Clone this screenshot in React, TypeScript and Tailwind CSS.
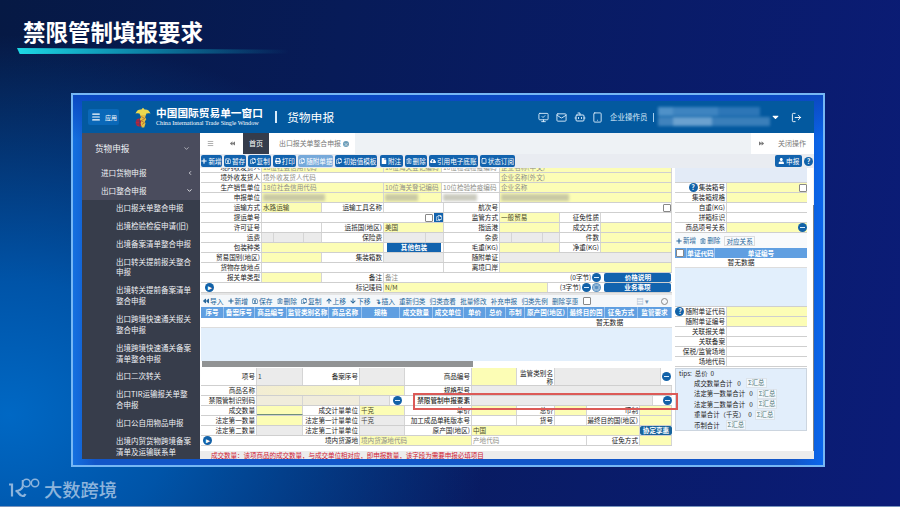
import type { ReactNode } from "react";
import {
  FaArrowDown,
  FaArrowUp,
  FaBackward,
  FaCaretDown,
  FaCloudUploadAlt,
  FaFile,
  FaForward,
  FaPlus,
  FaPrint,
  FaRegCopy,
  FaRegSave,
  FaRegTrashAlt,
  FaUser,
} from "react-icons/fa";
import { ChevronDown, ChevronLeft, LogOut, Mail, Menu, MonitorCheck, Bot, Tablet } from "lucide-react";

type CellProps = {
  w: string;
  tone?: "label" | "white" | "yellow" | "gray" | "beige";
  hint?: boolean;
  className?: string;
  children?: ReactNode;
};

const tones = {
  label: "bg-white justify-end pr-[1px] text-[#222]",
  white: "bg-white pl-[1px] text-[#444]",
  yellow: "bg-[#fcfdb5] pl-[1px] text-[#4b4b2c]",
  gray: "bg-[#ebebeb] pl-[1px] text-[#444]",
  beige: "bg-[#f0ecdc] pl-[1px] text-[#444]",
};

function Cell({ w, tone = "label", hint, className = "", children }: CellProps) {
  return (
    <div
      className={`flex shrink-0 items-center overflow-hidden border-r border-[#d5d5d5] whitespace-nowrap ${w} ${tones[tone]} ${className}`}
    >
      {hint ? <span className="text-[#8f8f88]">{children}</span> : children}
    </div>
  );
}

function Row({ h = "h-[10px]", children }: { h?: string; children: ReactNode }) {
  return <div className={`flex shrink-0 border-b border-[#cfcfcf] bg-white ${h}`}>{children}</div>;
}

function Box() {
  return <span className="inline-block h-[8px] w-[8px] shrink-0 rounded-[1px] border border-[#888] bg-white" />;
}

function Dot({ children }: { children?: ReactNode }) {
  return (
    <span className="flex h-[9px] w-[9px] shrink-0 items-center justify-center rounded-full bg-[#1262a8] text-[7px] leading-none font-bold text-white">
      {children ?? <span className="h-[1.5px] w-[5px] bg-[#d8ecff]" />}
    </span>
  );
}

function Mosaic({ w }: { w: string }) {
  return <span className={`h-[7px] bg-[#aeae9c] opacity-65 blur-[1.5px] ${w}`} />;
}

const menu = [
  ["出口报关单整合申报"],
  ["出境检验检疫申请(旧)"],
  ["出境备案清单整合申报"],
  ["出口转关提前报关整合", "申报"],
  ["出境转关提前备案清单", "整合申报"],
  ["出口跨境快速通关报关", "整合申报"],
  ["出境跨境快速通关备案", "清单整合申报"],
  ["出口二次转关"],
  ["出口TIR运输报关单整", "合申报"],
  ["出口公自用物品申报"],
  ["出境内贸货物跨境备案", "清单及运输联系单"],
];

const actions = [
  { text: "新增", icon: <FaPlus />, w: "w-[21px]" },
  { text: "暂存", icon: <FaRegSave />, w: "w-[22px]" },
  { text: "复制", icon: <FaRegCopy />, w: "w-[23px]" },
  { text: "打印", icon: <FaPrint />, w: "w-[23px]" },
  { text: "随附单据", icon: <FaRegCopy />, w: "w-[35px]", dim: true },
  { text: "初始值模板", icon: <FaRegCopy />, w: "w-[42px]" },
  { text: "附注", icon: <FaFile />, w: "w-[23px]" },
  { text: "删除", icon: <FaRegTrashAlt />, w: "w-[22px]" },
  { text: "引用电子底账", icon: <FaCloudUploadAlt />, w: "w-[49px]" },
  { text: "状态订阅", icon: <Tablet strokeWidth={3} />, w: "w-[35px]" },
];

const tools = [
  { text: "导入", icon: <FaBackward /> },
  { text: "新增", icon: <FaPlus /> },
  { text: "保存", icon: <FaRegSave /> },
  { text: "删除", icon: <FaRegTrashAlt /> },
  { text: "复制", icon: <FaRegCopy /> },
  { text: "上移", icon: <FaArrowUp /> },
  { text: "下移", icon: <FaArrowDown /> },
  { text: "插入", icon: <span className="font-bold">↴</span> },
];

const moreTools = ["重新归类", "归类查看", "批量修改", "补充申报", "归类先例", "删除享惠"];

const columns = [
  { text: "序号", w: "w-[23px]" },
  { text: "备案序号", w: "w-[31px]" },
  { text: "商品编号", w: "w-[32px]" },
  { text: "监管类别名称", w: "w-[42px]" },
  { text: "商品名称", w: "w-[33px]" },
  { text: "规格", w: "w-[38px]" },
  { text: "成交数量", w: "w-[33px]" },
  { text: "成交单位", w: "w-[31px]" },
  { text: "单价", w: "w-[22px]" },
  { text: "总价", w: "w-[20px]" },
  { text: "币制", w: "w-[19px]" },
  { text: "原产国(地区)", w: "w-[43px]" },
  { text: "最终目的国", w: "w-[37px]" },
  { text: "征免方式", w: "w-[33px]" },
  { text: "监管要求", w: "w-[34px]" },
];

const totals = [
  { text: "成交数量合计", value: "0", gap: "gap-[5px]" },
  { text: "法定第一数量合计", value: "0", gap: "gap-[4px]" },
  { text: "法定第二数量合计", value: "0", gap: "gap-[4px]" },
  { text: "重量合计（千克）", value: "0", gap: "gap-[3px]" },
  { text: "币制合计", value: "", gap: "gap-[3px]" },
];

function Header() {
  return (
    <header className="flex h-[32px] shrink-0 items-center bg-[#03599f] text-white">
      <div className="ml-[6px] flex h-[16px] w-[31px] items-center gap-[4px] rounded-[2px] bg-[#0a68b8] pl-[3px] text-[6px]">
        <Menu size={10} strokeWidth={2.8} />
        应用
      </div>
      <svg className="ml-[16px] h-[21px] w-[16px]" viewBox="0 0 16 21">
        <circle cx="4.6" cy="15.5" r="3.9" fill="#b7263a" />
        <path d="M1 14h7M1 17h7M4.5 11.5v8" stroke="#54366d" strokeWidth=".7" />
        <path d="M8 .8l1.600 1.800c3-.3 5 1.400 5.900 4-2-.7-3.600-.4-4.700.3l.6 1.200H4.600l.6-1.200C4.100 6.200 2.500 5.900.5 6.600c.9-2.600 2.900-4.300 5.900-4z" fill="#ecd94f" />
        <path d="M5 8h6l-.9 2.200 1.200 2.100-1.500 2.300.7 2-1.300 4H6.800l-1.200-4 .7-2-1.500-2.300 1.200-2.100z" fill="#e2bf42" />
        <path d="M6.200 9.500l3.600 2-3.600 2.200 3.300 2-2.500 1.800" fill="none" stroke="#b36b2e" strokeWidth=".8" />
      </svg>
      <div className="ml-[5px] w-[110px] whitespace-nowrap">
        <div className="text-[10.700px] leading-[12px] font-bold">中国国际贸易单一窗口</div>
        <div className="font-['Liberation_Serif','Noto_Sans_CJK_SC',serif] text-[6.150px] leading-[8px]">
          China International Trade Single Window
        </div>
      </div>
      <span className="ml-[9px] h-[12px] w-[2px] bg-[#d9ebfa]" />
      <span className="ml-[10px] text-[11.800px] leading-[14px]">货物申报</span>
      <div className="ml-auto flex items-center text-[#d9ebfa]">
        <MonitorCheck size={11} className="mr-[7px]" />
        <Mail size={11} className="mr-[7px]" />
        <Bot size={12} className="mr-[6px]" />
        <Tablet size={11} className="mr-[7px]" />
        <span className="w-[43px] text-[7.500px] whitespace-nowrap">企业操作员</span>
        <span className="mr-[4px] h-[9px] w-px bg-[#a5cdec]" />
        <span className="flex h-[20px] w-[112px] flex-col gap-[1px] blur-[1.5px]">
          <span className="flex h-[9px] w-[102px]">
            <span className="w-[15px] bg-[#4f91c8]" />
            <span className="w-[45px] bg-[#3e84c0]" />
            <span className="w-[42px] bg-[#2d76b7]" />
          </span>
          <span className="flex h-[9px]">
            <span className="w-[15px] bg-[#4083bd]" />
            <span className="w-[39px] bg-[#6ba1cf]" />
            <span className="w-[58px] bg-[#3a7fba]" />
          </span>
        </span>
        <FaCaretDown className="ml-[2px] h-[10px] w-[7px] text-white" />
        <LogOut size={11} className="mr-[12px] ml-[12px] text-white" />
      </div>
    </header>
  );
}

function Sidebar() {
  return (
    <aside className="flex w-[118px] shrink-0 flex-col overflow-hidden bg-[#373d4b] text-[#f1f2f5]">
      <div className="h-[67px] shrink-0 bg-[#4a4c5d]">
        <div className="flex h-[30px] items-center justify-between pr-[10px] pl-[13px] text-[8.600px]">
          货物申报 <ChevronDown size={7} />
        </div>
        <div className="flex h-[19px] items-center justify-between pr-[7px] pl-[19px] text-[7.600px]">
          进口货物申报 <ChevronLeft size={6} strokeWidth={3} />
        </div>
        <div className="flex h-[17px] items-center justify-between pr-[7px] pl-[19px] text-[7.600px]">
          出口整合申报 <ChevronDown size={7} strokeWidth={3} />
        </div>
      </div>
      <ul className="flex flex-col gap-[7.100px] pt-[3px] pl-[34px] text-[7.500px] leading-[10.800px] whitespace-nowrap">
        {menu.map((lines) => (
          <li key={lines[0]}>
            {lines.map((line) => (
              <div key={line}>{line}</div>
            ))}
          </li>
        ))}
      </ul>
    </aside>
  );
}

function Tabs() {
  return (
    <nav className="flex h-[21px] shrink-0 bg-[#eef2f5] text-[7px] text-[#777]">
      <div className="flex w-[43px] items-center justify-between bg-white pr-[7px] pl-[7px]">
        <Menu size={7} />
        <FaBackward className="h-[5px]" />
      </div>
      <div className="flex w-[26px] items-center justify-center bg-[#353c4b] text-white">首页</div>
      <div className="flex w-[86px] items-center gap-[2px] bg-white pl-[10px] text-[6.900px] whitespace-nowrap">
        出口报关单整合申报
        <span className="flex h-[6px] w-[6px] items-center justify-center rounded-full bg-[#6c9db8] text-[5px] leading-none text-white">×</span>
      </div>
      <div className="ml-auto flex w-[63px] items-center justify-between bg-white pr-[8px] pl-[7px]">
        <FaForward className="h-[5px]" />
        关闭操作
      </div>
    </nav>
  );
}

function ActionBar() {
  return (
    <div className="flex h-[14px] shrink-0 items-center gap-[2.100px] bg-[#e9ecf1] pl-[1px] text-[6.600px] leading-[10px] text-white">
      {actions.map((a) => (
        <span
          key={a.text}
          className={`flex h-[12px] shrink-0 items-center justify-center gap-[1px] rounded-[2px] whitespace-nowrap ${a.w} ${a.dim ? "bg-[#76a9da]" : "bg-[#1263ae]"} [&>svg]:h-[6px] [&>svg]:w-[6px]`}
        >
          {a.icon}
          {a.text}
        </span>
      ))}
      <span className="ml-auto flex h-[12px] w-[27px] items-center justify-center gap-[2px] rounded-[2px] bg-[#1263ae]">
        <FaUser className="h-[6px]" />
        申报
      </span>
      <span className="mr-[1px]">
        <Dot>?</Dot>
      </span>
    </div>
  );
}

function MainForm() {
  return (
    <section className="flex flex-col">
      <div className="flex h-[5px] items-end overflow-hidden border-b border-[#cfcfcf] *:h-[10px]">
        <Cell w="w-[61px]">境内收发货人</Cell>
        <Cell w="w-[122px]" tone="yellow" hint>18位社会信用代码</Cell>
        <Cell w="w-[58px]" tone="yellow" hint>10位海关登记编码</Cell>
        <Cell w="w-[58px]" tone="white" hint>10位检验检疫编码</Cell>
        <Cell w="w-[172px]" tone="yellow" hint>企业名称(中文)</Cell>
      </div>
      <Row>
        <Cell w="w-[61px]">境外收发货人</Cell>
        <Cell w="w-[238px]" tone="white" hint>境外收发货人代码</Cell>
        <Cell w="w-[172px]" tone="yellow" hint>企业名称(外文)</Cell>
      </Row>
      <Row>
        <Cell w="w-[61px]">生产销售单位</Cell>
        <Cell w="w-[122px]" tone="yellow" hint>18位社会信用代码</Cell>
        <Cell w="w-[58px]" tone="yellow" hint>10位海关登记编码</Cell>
        <Cell w="w-[58px]" tone="white" hint>10位检验检疫编码</Cell>
        <Cell w="w-[172px]" tone="yellow" hint>企业名称</Cell>
      </Row>
      <Row>
        <Cell w="w-[61px]">申报单位</Cell>
        <Cell w="w-[122px]" tone="yellow"><Mosaic w="w-[62px]" /></Cell>
        <Cell w="w-[58px]" tone="yellow"><Mosaic w="w-[33px]" /></Cell>
        <Cell w="w-[58px]" tone="white"><Mosaic w="w-[34px]" /></Cell>
        <Cell w="w-[172px]" tone="yellow"><Mosaic w="w-[68px]" /></Cell>
      </Row>
      <Row>
        <Cell w="w-[61px]">运输方式</Cell>
        <Cell w="w-[60px]" tone="yellow">水路运输</Cell>
        <Cell w="w-[62px]">运输工具名称</Cell>
        <Cell w="w-[60px]" tone="white" />
        <Cell w="w-[56px]">航次号</Cell>
        <Cell w="w-[172px]" tone="white" className="justify-end"><Box /></Cell>
      </Row>
      <Row>
        <Cell w="w-[61px]">提运单号</Cell>
        <Cell w="w-[182px]" tone="white" className="justify-end gap-[1px]">
          <Box />
          <span className="flex h-[9px] w-[9px] items-center justify-center bg-[#1263ae] text-white"><FaRegCopy className="h-[6px] w-[6px]" /></span>
        </Cell>
        <Cell w="w-[56px]">监管方式</Cell>
        <Cell w="w-[60px]" tone="yellow">一般贸易</Cell>
        <Cell w="w-[41px]">征免性质</Cell>
        <Cell w="w-[71px]" tone="white" />
      </Row>
      <Row>
        <Cell w="w-[61px]">许可证号</Cell>
        <Cell w="w-[60px]" tone="white" />
        <Cell w="w-[62px]">运抵国(地区)</Cell>
        <Cell w="w-[60px]" tone="yellow">美国</Cell>
        <Cell w="w-[56px]">指运港</Cell>
        <Cell w="w-[60px]" tone="yellow" />
        <Cell w="w-[41px]">成交方式</Cell>
        <Cell w="w-[71px]" tone="yellow" />
      </Row>
      <Row>
        <Cell w="w-[61px]">运费</Cell>
        <Cell w="w-[12px]" tone="gray" />
        <Cell w="w-[30px]" tone="gray" />
        <Cell w="w-[18px]" tone="gray" />
        <Cell w="w-[62px]">保险费</Cell>
        <Cell w="w-[42px]" tone="gray" />
        <Cell w="w-[18px]" tone="gray" />
        <Cell w="w-[56px]">杂费</Cell>
        <Cell w="w-[12px]" tone="gray" />
        <Cell w="w-[31px]" tone="gray" />
        <Cell w="w-[17px]" tone="gray" />
        <Cell w="w-[41px]">件数</Cell>
        <Cell w="w-[71px]" tone="yellow" />
      </Row>
      <Row>
        <Cell w="w-[61px]">包装种类</Cell>
        <Cell w="w-[122px]" tone="yellow" />
        <Cell w="w-[60px]" tone="white" className="pl-[3px]">
          <span className="flex h-[9px] w-[54px] items-center justify-center bg-[#1263ae] font-bold text-white">其他包装</span>
        </Cell>
        <Cell w="w-[56px]">毛重(KG)</Cell>
        <Cell w="w-[60px]" tone="yellow" />
        <Cell w="w-[41px]">净重(KG)</Cell>
        <Cell w="w-[71px]" tone="yellow" />
      </Row>
      <Row>
        <Cell w="w-[61px]">贸易国别(地区)</Cell>
        <Cell w="w-[60px]" tone="yellow" />
        <Cell w="w-[62px]">集装箱数</Cell>
        <Cell w="w-[60px]" tone="gray" />
        <Cell w="w-[56px]">随附单证</Cell>
        <Cell w="w-[172px]" tone="gray" />
      </Row>
      <Row>
        <Cell w="w-[61px]">货物存放地点</Cell>
        <Cell w="w-[182px]" tone="white" />
        <Cell w="w-[56px]">离境口岸</Cell>
        <Cell w="w-[172px]" tone="yellow" />
      </Row>
      <Row>
        <Cell w="w-[61px]">报关单类型</Cell>
        <Cell w="w-[60px]" tone="yellow" />
        <Cell w="w-[62px]">备注</Cell>
        <Cell w="w-[186px]" tone="white" hint className="border-r-0">备注</Cell>
        <div className="flex flex-1 items-center justify-end gap-[3px] whitespace-nowrap">
          <span className="-mr-[2px]">(0字节)</span>
          <Dot />
          <span className="mr-[1px] flex h-[9px] w-[67px] items-center justify-center rounded-[2px] bg-[#1263ae] font-bold text-white">价格说明</span>
        </div>
      </Row>
      <Row>
        <div className="flex w-[121px] items-center pl-[4px]"><Dot>▸</Dot></div>
        <Cell w="w-[62px]">标记唛码</Cell>
        <Cell w="w-[164px]" tone="yellow">N/M</Cell>
        <div className="flex flex-1 items-center justify-end gap-[1px] whitespace-nowrap">
          (3字节)
          <Dot />
          <span className="mr-[2px] opacity-70"><Dot>◎</Dot></span>
          <span className="mr-[1px] flex h-[9px] w-[67px] items-center justify-center rounded-[2px] bg-[#1263ae] font-bold text-white">业务事项</span>
        </div>
      </Row>
    </section>
  );
}

function GoodsTable() {
  return (
    <section className="flex flex-col">
      <div className="flex h-[14px] items-center border-t-2 border-[#e5e5e5] bg-[#f4f7fa] pl-[2px] text-[6.800px] text-[#28679b]">
        {tools.map((t) => (
          <span key={t.text} className="flex w-[24.500px] shrink-0 items-center gap-[1px] whitespace-nowrap [&>svg]:h-[6px] [&>svg]:w-[6px]">
            {t.icon}
            {t.text}
          </span>
        ))}
        {moreTools.map((t) => (
          <span key={t} className="w-[30.600px] shrink-0 text-[6.600px] whitespace-nowrap">{t}</span>
        ))}
        <Box />
        <span className="ml-auto text-[7px] whitespace-nowrap text-[#6f93b4]">▤ ▾</span>
        <span className="mr-[4px] ml-[12px] h-[7px] w-[7px] rounded-full border border-[#888]" />
      </div>
      <div className="flex h-[11px] bg-[#609fe1] text-[6.600px] font-bold text-white">
        {columns.map((c) => (
          <span key={c.text} className={`flex shrink-0 items-center justify-center overflow-hidden border-r border-[#9cc5f0] whitespace-nowrap ${c.w}`}>
            {c.text}
          </span>
        ))}
      </div>
      <div className="flex h-[10px] items-center border-b border-[#ddd] bg-white pl-[395px] text-[6.800px]">暂无数据</div>
      <div className="h-[33px] bg-[#e2effc]" />
      <div className="h-[7px] bg-white pl-[1px]">
        <div className="h-[6px] w-[271px] bg-[#919394]" />
      </div>
    </section>
  );
}

function GoodsForm() {
  return (
    <section className="relative flex flex-col">
      <Row h="h-[18px]">
        <Cell w="w-[56px]">项号</Cell>
        <Cell w="w-[46px]" tone="gray">1</Cell>
        <Cell w="w-[57px]">备案序号</Cell>
        <Cell w="w-[45px]" tone="gray" />
        <Cell w="w-[67px]">商品编号</Cell>
        <Cell w="w-[45px]" tone="yellow" />
        <Cell w="w-[38px]" className="text-right leading-[8px]">监管类别名<br />称</Cell>
        <Cell w="w-[106px]" tone="gray" />
        <div className="flex flex-1 items-center pl-[1px]"><Dot /></div>
      </Row>
      <Row>
        <Cell w="w-[56px]">商品名称</Cell>
        <Cell w="w-[148px]" tone="yellow" className="bg-linear-to-r from-[#f2ecd4] to-[#fcfdb5]" />
        <Cell w="w-[67px]">规格型号</Cell>
        <Cell w="w-[200px]" tone="gray" />
      </Row>
      <Row>
        <Cell w="w-[56px]">禁限管制识别码</Cell>
        <Cell w="w-[46px]" tone="beige" />
        <Cell w="w-[57px]" tone="beige" />
        <Cell w="w-[30px]" tone="gray" />
        <div className="flex w-[15px] items-center justify-center"><Dot /></div>
        <Cell w="w-[67px]" className="font-medium">禁限管制申报要素</Cell>
        <Cell w="w-[181px]" tone="gray" />
        <div className="flex flex-1 items-center justify-end"><Dot /></div>
      </Row>
      <Row>
        <Cell w="w-[56px]">成交数量</Cell>
        <Cell w="w-[46px]" tone="yellow" className="border-b border-b-[#6f8f7c]" />
        <Cell w="w-[57px]">成交计量单位</Cell>
        <Cell w="w-[45px]" tone="yellow">千克</Cell>
        <Cell w="w-[67px]">单价</Cell>
        <Cell w="w-[45px]" tone="yellow" />
        <Cell w="w-[38px]">总价</Cell>
        <Cell w="w-[32px]" tone="yellow" />
        <Cell w="w-[53px]">币制</Cell>
        <Cell w="w-[32px]" tone="yellow" />
      </Row>
      <Row>
        <Cell w="w-[56px]">法定第一数量</Cell>
        <Cell w="w-[46px]" tone="yellow" />
        <Cell w="w-[57px]">法定第一计量单位</Cell>
        <Cell w="w-[45px]" tone="gray">千克</Cell>
        <Cell w="w-[67px]">加工成品单耗版本号</Cell>
        <Cell w="w-[45px]" tone="white" />
        <Cell w="w-[38px]">货号</Cell>
        <Cell w="w-[32px]" tone="white" />
        <Cell w="w-[53px]">最终目的国(地区)</Cell>
        <Cell w="w-[32px]" tone="yellow" />
      </Row>
      <Row>
        <Cell w="w-[56px]">法定第二数量</Cell>
        <Cell w="w-[46px]" tone="gray" />
        <Cell w="w-[57px]">法定第二计量单位</Cell>
        <Cell w="w-[45px]" tone="gray" />
        <Cell w="w-[67px]">原产国(地区)</Cell>
        <Cell w="w-[168px]" tone="yellow">中国</Cell>
        <span className="flex h-[9px] w-[32px] items-center justify-center rounded-[2px] bg-[#17649c] font-bold text-white">协定享惠</span>
      </Row>
      <Row>
        <div className="flex w-[102px] items-center pl-[2px]"><Dot>▸</Dot></div>
        <Cell w="w-[57px]">境内货源地</Cell>
        <Cell w="w-[112px]" tone="yellow" hint>境内货源地代码</Cell>
        <Cell w="w-[115px]" tone="white" hint>产地代码</Cell>
        <Cell w="w-[53px]">征免方式</Cell>
        <Cell w="w-[32px]" tone="yellow" />
      </Row>
      {/* highlight around the declaration element field */}
      <div className="absolute top-[25px] left-[212px] h-[17px] w-[265px] border-2 border-[#dc5a57]" />
    </section>
  );
}

function FieldRow({ label, tone = "white", help, children }: { label: string; tone?: "white" | "yellow"; help?: boolean; children?: ReactNode }) {
  return (
    <Row>
      <div className="flex w-[52px] shrink-0 items-center justify-end gap-[1px] border-r border-[#d5d5d5] pr-[1px] whitespace-nowrap">
        {help ? <Dot>?</Dot> : null}
        {label}
      </div>
      <div className={`flex flex-1 items-center justify-end ${tone === "yellow" ? "bg-[#fcfdb5]" : "bg-white"}`}>{children}</div>
    </Row>
  );
}

function SidePanel() {
  return (
    <section className="mr-[6px] ml-[3px] flex w-[132px] shrink-0 flex-col">
      <div className="h-[15px] border-b border-[#cfcfcf] bg-[#e3ebf7]" />
      <FieldRow label="集装箱号" tone="yellow" help><Box /></FieldRow>
      <FieldRow label="集装箱规格" tone="yellow" />
      <FieldRow label="自重(KG)" />
      <FieldRow label="拼箱标识" />
      <FieldRow label="商品项号关系" tone="yellow"><Dot /></FieldRow>
      <div className="flex h-[15px] items-center gap-[4px] bg-[#f8fafc] pl-[1px] text-[#28679b]">
        <span className="flex items-center gap-[1px]"><FaPlus className="h-[6px] w-[6px]" />新增</span>
        <span className="flex items-center gap-[1px]"><FaRegTrashAlt className="h-[6px] w-[6px]" />删除</span>
        <span className="border border-[#ddd] px-[1px] leading-[8px]">对应关系</span>
      </div>
      <div className="flex h-[10px] items-center bg-[#609fe1] font-bold text-white">
        <span className="flex w-[11px] items-center pl-[1px]"><Box /></span>
        <span className="w-[29px] border-x border-[#9cc5f0] text-center leading-[10px]">单证代码</span>
        <span className="flex-1 text-center">单证编号</span>
      </div>
      <div className="flex h-[10px] items-center justify-center border-b border-[#ddd] bg-white text-[6.800px]">暂无数据</div>
      <div className="h-[39px] border-b border-[#cfcfcf] bg-[#e2effc]" />
      <FieldRow label="随附单证代码" tone="yellow" help />
      <FieldRow label="随附单证编号" tone="yellow" />
      <FieldRow label="关联报关单" />
      <FieldRow label="关联备案" />
      <FieldRow label="保税/监管场地" />
      <FieldRow label="场地代码" />
      <div className="mt-[1px] h-[63px] border border-[#ccd5df] bg-[#e2eefb] pl-[3px] text-[6.400px]">
        <div className="leading-[9px]">tips:&nbsp; 总价&nbsp; 0</div>
        {totals.map((t) => (
          <div key={t.text} className={`flex h-[10.500px] items-center pl-[15px] whitespace-nowrap ${t.gap}`}>
            <span>{t.text}</span>
            <span>{t.value}</span>
            <span className="border border-[#dce3ea] bg-[#f1f7fc] px-[1px] leading-[8px] text-[#577]">Σ汇总</span>
          </div>
        ))}
      </div>
    </section>
  );
}

export default function App() {
  return (
    <main className="relative flex h-[507px] w-[900px] flex-col overflow-hidden border-b border-[#7894bd] bg-[radial-gradient(ellipse_480px_380px_at_1%_82%,#0068c4_0%,#0054a8_35%,transparent_100%),linear-gradient(100deg,#061944_0%,#071b58_35%,#0b1c78_100%)] font-['Noto_Sans_CJK_SC','Liberation_Sans',sans-serif]">
      <div className="h-[93px] shrink-0 pt-[17px] pl-[17px]">
        <h1 className="pl-[6px] text-[22.500px] leading-[28px] font-bold text-white">禁限管制填报要求</h1>
        <div className="mt-[3px] h-[6px] w-[272px] bg-linear-to-r from-[#1ed9e5] via-[#0c7ba0] via-50% to-transparent [clip-path:polygon(0_0,100%_30%,100%_90%,1%_100%)]" />
      </div>
      <div className="ml-[71px] flex h-[374px] w-[754px] shrink-0 flex-col border-2 border-[#76b7f4] bg-[linear-gradient(180deg,#0b48c2_0%,#0b48c200_12%),linear-gradient(90deg,#1470e0_0%,#1256c8_3%,#1256c8_96%,#0a66ec_100%)] px-[9px] pt-[6px] pb-[6px]">
        <Header />
        <div className="flex h-[326px] shrink-0">
          <Sidebar />
          <div className="flex min-w-0 flex-1 flex-col bg-white">
            <Tabs />
            <ActionBar />
            <div className="flex h-[283px] shrink-0 bg-white pl-[1px] text-[6.600px] leading-[9px] text-[#222]">
              <div className="w-[471px] shrink-0">
                <MainForm />
                <GoodsTable />
                <GoodsForm />
              </div>
              <SidePanel />
              <div className="ml-auto h-full w-[4px] bg-[#f2f2f2] pt-[37px]">
                <div className="h-full bg-[#7c8087]" />
              </div>
            </div>
            <div className="flex flex-1 items-center overflow-hidden bg-[#ececec] pl-[11px] text-[6.600px] leading-[8px] tracking-[-0.1px] whitespace-nowrap text-[#d02035]">
              成交数量：该项商品的成交数量，与成交单位相对应，即申报数量，该字段为需要申报必填项目
            </div>
          </div>
        </div>
      </div>
      <footer className="flex items-center gap-[4px] pt-[9px] pl-[8px] text-[#8db4dc]">
        <svg className="h-[24px] w-[32px]" viewBox="0 0 32 24" fill="none" stroke="currentColor">
          <path d="M1 7.500h3v12M15 9.500c-1.500 3-4 4.500-7.500 4.500 3.500 0 3.500 5 7 5 1.500 0 2.500-.8 3-2" strokeWidth="2.200" />
          <path d="M14.500 3v7" strokeWidth="1.500" />
          <circle cx="18.500" cy="6" r="3.700" strokeWidth="1.500" />
          <circle cx="27" cy="6" r="3.700" strokeWidth="1.500" />
        </svg>
        <span className="text-[18.300px] leading-[26px] font-medium">大数跨境</span>
      </footer>
    </main>
  );
}
